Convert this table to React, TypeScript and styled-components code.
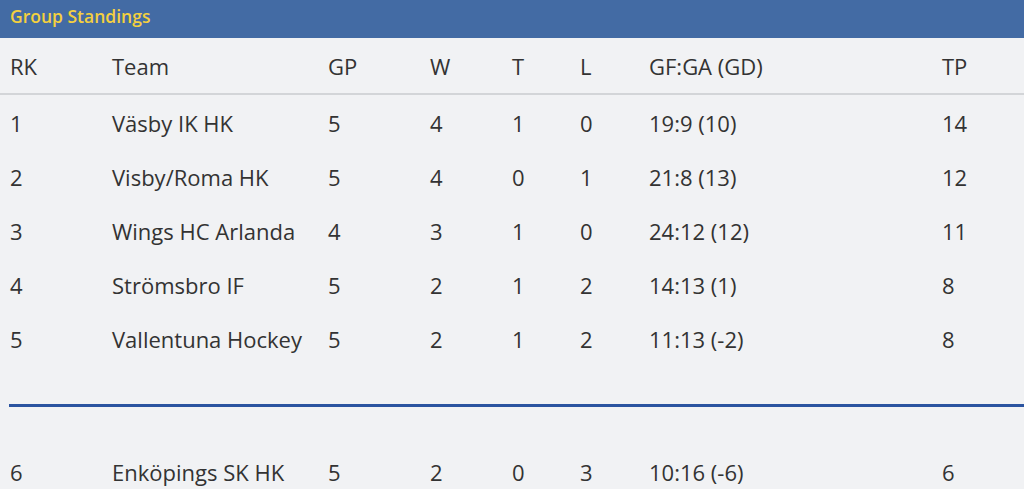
import React from "react";
import styled, { createGlobalStyle } from "styled-components";

const GlobalStyle = createGlobalStyle`
  body {
    margin: 0;
    background: #f1f2f4;
    font-family: "Open Sans", "Liberation Sans", sans-serif;
    color: #333;
  }
`;

const Wrapper = styled.div`
  width: 1024px;
  overflow: hidden;
`;

const TitleBar = styled.div`
  height: 38px;
  background: #436ba4;
  color: #f4d03f;
  font-size: 17.5px;
  font-weight: 600;
  padding: 5px 10px 0;
  box-sizing: border-box;
  line-height: 22px;
`;

const cols = "102px 216px 102px 82px 68px 69px 293px 1fr";

const Row = styled.div<{ $head?: boolean }>`
  display: grid;
  grid-template-columns: ${cols};
  align-items: center;
  height: ${(p) => (p.$head ? "57px" : "54px")};
  padding-left: 10px;
  font-size: 22px;
  line-height: 26px;
  color: #333;
  border-bottom: ${(p) => (p.$head ? "2px solid #d3d5d8" : "none")};
  box-sizing: border-box;
  white-space: nowrap;
`;

const Cell = styled.div``;

const Body = styled.div`
  padding-top: 1px;
`;

const Separator = styled.div`
  margin: 38px 0 38px 9px;
  height: 3px;
  background: #2b54a0;
`;

const headers = ["RK", "Team", "GP", "W", "T", "L", "GF:GA (GD)", "TP"];

const rows = [
  ["1", "Väsby IK HK", "5", "4", "1", "0", "19:9 (10)", "14"],
  ["2", "Visby/Roma HK", "5", "4", "0", "1", "21:8 (13)", "12"],
  ["3", "Wings HC Arlanda", "4", "3", "1", "0", "24:12 (12)", "11"],
  ["4", "Strömsbro IF", "5", "2", "1", "2", "14:13 (1)", "8"],
  ["5", "Vallentuna Hockey", "5", "2", "1", "2", "11:13 (-2)", "8"],
];

const lower = [["6", "Enköpings SK HK", "5", "2", "0", "3", "10:16 (-6)", "6"]];

const App: React.FC = () => {
  return (
    <>
      <GlobalStyle />
      <Wrapper>
        <TitleBar>Group Standings</TitleBar>
        <Row $head>
          {headers.map((h) => (
            <Cell key={h}>{h}</Cell>
          ))}
        </Row>
        <Body>
          {rows.map((r) => (
            <Row key={r[0]}>
              {r.map((c, i) => (
                <Cell key={i}>{c}</Cell>
              ))}
            </Row>
          ))}
          <Separator />
          {lower.map((r) => (
            <Row key={r[0]}>
              {r.map((c, i) => (
                <Cell key={i}>{c}</Cell>
              ))}
            </Row>
          ))}
        </Body>
      </Wrapper>
    </>
  );
};

export default App;
